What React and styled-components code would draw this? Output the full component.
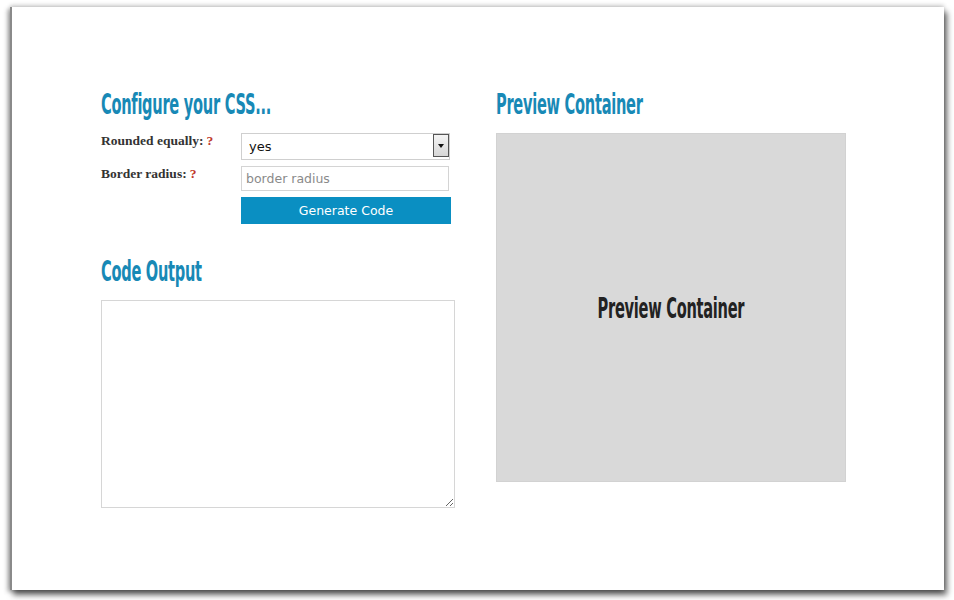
import React from "react";
import styled, { createGlobalStyle } from "styled-components";

const GlobalStyle = createGlobalStyle`
  html, body {
    margin: 0;
    background: #ffffff;
  }
  body {
    padding: 7px 0 10px 10px;
    min-height: 100vh;
    box-sizing: border-box;
  }
`;

const Frame = styled.div`
  box-sizing: border-box;
  width: 934px;
  height: 583px;
  background: #fff;
  border-left: 2px solid #8a8a8a;
  box-shadow: 0 -2px 4px rgba(0, 0, 0, 0.18), 3px 5px 6px rgba(0, 0, 0, 0.6),
    -3px 2px 4px rgba(0, 0, 0, 0.25);
  padding: 77px 0 0 89px;
`;

const Columns = styled.div`
  display: grid;
  grid-template-columns: 354px 350px;
  column-gap: 41px;
`;

const Column = styled.div`
  display: flex;
  flex-direction: column;
`;

const Heading = styled.h2`
  margin: 0;
  height: 41px;
  font-family: "DejaVu Sans", sans-serif;
  font-stretch: condensed;
  font-weight: 700;
  font-size: 29px;
  line-height: 40px;
  color: #1889b6;
  white-space: nowrap;
  span {
    display: inline-block;
    transform: scaleX(0.56);
    transform-origin: left center;
    letter-spacing: -0.5px;
  }
`;

const Form = styled.div`
  display: grid;
  grid-template-columns: 140px 210px;
  row-gap: 6px;
  align-items: start;
`;

const Label = styled.label`
  font-family: "Liberation Serif", "DejaVu Serif", serif;
  font-weight: 700;
  font-size: 13.5px;
  color: #333;
  b {
    color: #c0392b;
    font-weight: 700;
    margin-left: 3px;
  }
`;

const SelectWrap = styled.div`
  position: relative;
  width: 209px;
  height: 27px;
`;

const Select = styled.select`
  appearance: none;
  box-sizing: border-box;
  width: 100%;
  height: 100%;
  border: 1px solid #cfcfcf;
  border-radius: 0;
  background: #fff;
  padding: 0 0 0 7px;
  font-family: "DejaVu Sans", sans-serif;
  font-size: 13px;
  color: #111;
  outline: none;
`;

const Arrow = styled.span`
  position: absolute;
  top: 1px;
  right: 1px;
  width: 16px;
  height: 23px;
  box-sizing: border-box;
  border: 1px solid #555;
  background: linear-gradient(#f4f4f4, #d6d6d6);
  pointer-events: none;
  &::after {
    content: "";
    position: absolute;
    left: 4px;
    top: 9px;
    border-left: 3px solid transparent;
    border-right: 3px solid transparent;
    border-top: 4px solid #111;
  }
`;

const Input = styled.input`
  box-sizing: border-box;
  width: 208px;
  height: 25px;
  border: 1px solid #d4d4d4;
  padding: 0 4px;
  font-family: "DejaVu Sans", sans-serif;
  font-size: 12.5px;
  outline: none;
  &::placeholder {
    color: #8a8a8a;
  }
`;

const Button = styled.button`
  grid-column: 2;
  width: 210px;
  height: 27px;
  border: none;
  background: #0a8fc2;
  color: #fff;
  font-family: "DejaVu Sans", sans-serif;
  font-size: 12.5px;
  cursor: pointer;
`;

const Spacer = styled.div`
  height: ${(p) => p.$h}px;
`;

const Output = styled.textarea`
  box-sizing: border-box;
  width: 354px;
  height: 208px;
  border: 1px solid #d6d6d6;
  resize: both;
  outline: none;
`;

const Preview = styled.div`
  box-sizing: border-box;
  width: 350px;
  height: 349px;
  background: #d9d9d9;
  border: 1px solid #d2d2d2;
  display: flex;
  align-items: center;
  justify-content: center;
  span {
    display: inline-block;
    font-family: "DejaVu Sans", sans-serif;
    font-stretch: condensed;
    font-weight: 700;
    font-size: 29px;
    color: #222;
    transform: scaleX(0.56);
    letter-spacing: -0.5px;
    white-space: nowrap;
  }
`;

export default function App() {
  return (
    <>
      <GlobalStyle />
      <Frame>
        <Columns>
          <Column>
            <Heading>
              <span>Configure your CSS...</span>
            </Heading>
            <Spacer $h={8} />
            <Form>
              <Label>
                Rounded equally:<b>?</b>
              </Label>
              <SelectWrap>
                <Select defaultValue="yes">
                  <option value="yes">yes</option>
                  <option value="no">no</option>
                </Select>
                <Arrow />
              </SelectWrap>
              <Label>
                Border radius:<b>?</b>
              </Label>
              <Input placeholder="border radius" />
              <Button>Generate Code</Button>
            </Form>
            <Spacer $h={27} />
            <Heading>
              <span>Code Output</span>
            </Heading>
            <Spacer $h={8} />
            <Output />
          </Column>
          <Column>
            <Heading>
              <span>Preview Container</span>
            </Heading>
            <Spacer $h={8} />
            <Preview>
              <span>Preview Container</span>
            </Preview>
          </Column>
        </Columns>
      </Frame>
    </>
  );
}
